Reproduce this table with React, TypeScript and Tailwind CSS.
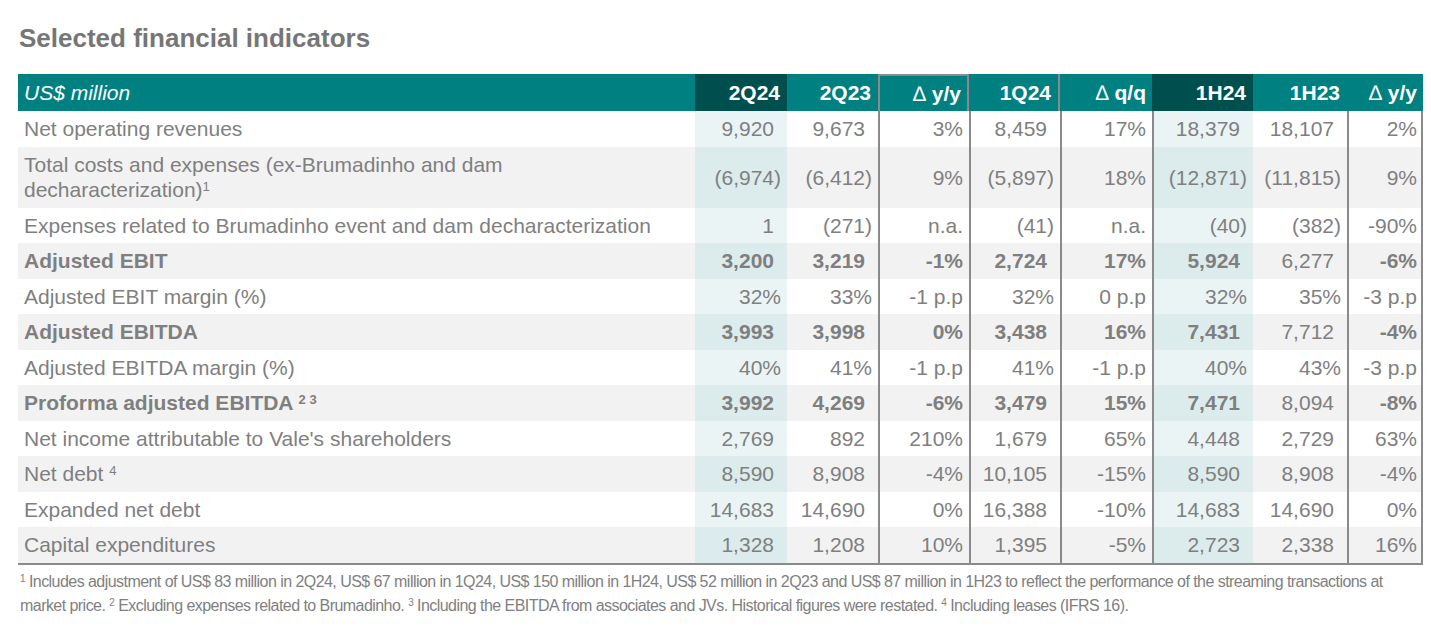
import React from "react";

type Row = {
  label: React.ReactNode;
  values: string[];
  bold?: boolean;
  tall?: boolean;
};

const rows: Row[] = [
  { label: "Net operating revenues", values: ["9,920", "9,673", "3%", "8,459", "17%", "18,379", "18,107", "2%"] },
  {
    label: (
      <>
        Total costs and expenses (ex-Brumadinho and dam
        <br />
        decharacterization)<sup className="text-[13px]">1</sup>
      </>
    ),
    values: ["(6,974)", "(6,412)", "9%", "(5,897)", "18%", "(12,871)", "(11,815)", "9%"],
    tall: true,
  },
  {
    label: "Expenses related to Brumadinho event and dam decharacterization",
    values: ["1", "(271)", "n.a.", "(41)", "n.a.", "(40)", "(382)", "-90%"],
  },
  { label: "Adjusted EBIT", values: ["3,200", "3,219", "-1%", "2,724", "17%", "5,924", "6,277", "-6%"], bold: true },
  { label: "Adjusted EBIT margin (%)", values: ["32%", "33%", "-1 p.p", "32%", "0 p.p", "32%", "35%", "-3 p.p"] },
  { label: "Adjusted EBITDA", values: ["3,993", "3,998", "0%", "3,438", "16%", "7,431", "7,712", "-4%"], bold: true },
  { label: "Adjusted EBITDA margin (%)", values: ["40%", "41%", "-1 p.p", "41%", "-1 p.p", "40%", "43%", "-3 p.p"] },
  {
    label: (
      <>
        Proforma adjusted EBITDA <sup className="text-[13px]">2 3</sup>
      </>
    ),
    values: ["3,992", "4,269", "-6%", "3,479", "15%", "7,471", "8,094", "-8%"],
    bold: true,
  },
  { label: "Net income attributable to Vale's shareholders", values: ["2,769", "892", "210%", "1,679", "65%", "4,448", "2,729", "63%"] },
  {
    label: (
      <>
        Net debt <sup className="text-[13px]">4</sup>
      </>
    ),
    values: ["8,590", "8,908", "-4%", "10,105", "-15%", "8,590", "8,908", "-4%"],
  },
  { label: "Expanded net debt", values: ["14,683", "14,690", "0%", "16,388", "-10%", "14,683", "14,690", "0%"] },
  { label: "Capital expenditures", values: ["1,328", "1,208", "10%", "1,395", "-5%", "2,723", "2,338", "16%"] },
];

const grid = "grid grid-cols-[677px_92px_91px_91px_91px_92px_101px_94px_76px]";

// body cell borders, per value column
const cellBorders = [
  "",
  "",
  "border-l-2 border-[#8a8a8a]",
  "border-l-2 border-[#8a8a8a]",
  "border-l-2 border-[#8a8a8a]",
  "border-l-2 border-[#8a8a8a]",
  "",
  "border-l-2 border-[#8a8a8a]",
];

function Value({ v }: { v: string }) {
  // plain numbers leave room for a closing paren, like an accounting format
  const plain = /^[\d,]+$/.test(v);
  return (
    <>
      {v}
      {plain && <span className="invisible">)</span>}
    </>
  );
}

export default function App() {
  return (
    <div className="w-[1431px] h-[634px] bg-white font-['Liberation_Sans',Arial,sans-serif] text-[#7f7f7f]">
      <h1 className="pt-[23px] pl-[19px] text-[26px] leading-[30px] font-bold text-[#767676]">
        Selected financial indicators
      </h1>

      <div className="mt-[21px] ml-[18px] w-[1405px]">
        {/* header */}
        <div className={`${grid} h-[37px] bg-[#008080] text-white text-[21px]`}>
          <div className="flex items-center pl-[6px] italic">US$ million</div>
          <div className="flex items-center justify-end pr-[7px] bg-[#004f4f] font-bold">2Q24</div>
          <div className="flex items-center justify-end pr-[7px] font-bold">2Q23</div>
          <div className="flex items-center justify-end pr-[6px] font-bold border-l-2 border-r-2 border-t-2 border-[#8a8a8a]">
            <span className="font-normal mr-[6px]">∆</span>y/y
          </div>
          <div className="flex items-center justify-end pr-[7px] font-bold border-r-2 border-[#8a8a8a]">1Q24</div>
          <div className="flex items-center justify-end pr-[6px] font-bold">
            <span className="font-normal mr-[6px]">∆</span>q/q
          </div>
          <div className="flex items-center justify-end pr-[7px] bg-[#004f4f] font-bold">1H24</div>
          <div className="flex items-center justify-end pr-[7px] font-bold">1H23</div>
          <div className="flex items-center justify-end pr-[6px] font-bold">
            <span className="font-normal mr-[6px]">∆</span>y/y
          </div>
        </div>

        {/* body */}
        <div className="border-b-2 border-[#8a8a8a] border-r-2 w-[1405px]">
          {rows.map((row, i) => {
            const shaded = i % 2 === 1;
            const tint = shaded ? "bg-[#dcecec]" : "bg-[#eaf4f4]";
            return (
              <div
                key={i}
                className={`${grid} ${row.tall ? "h-[61px] leading-[25px]" : "h-[35.5px]"} ${
                  shaded ? "bg-[#f2f2f2]" : "bg-white"
                } text-[21px]`}
              >
                <div className={`flex items-center pl-[6px] ${row.bold ? "font-bold" : ""}`}>
                  <div>{row.label}</div>
                </div>
                {row.values.map((v, j) => (
                  <div
                    key={j}
                    className={`flex items-center justify-end pr-[6px] whitespace-nowrap ${cellBorders[j]} ${
                      j === 0 || j === 5 ? tint : ""
                    } ${row.bold && j !== 6 ? "font-bold" : ""}`}
                  >
                    <Value v={v} />
                  </div>
                ))}
              </div>
            );
          })}
        </div>
      </div>

      <p className="mt-[5px] pl-[20px] text-[16px] leading-[24px] tracking-[-0.55px] whitespace-nowrap text-[#7f7f7f]">
        <sup className="text-[10px]">1</sup> Includes adjustment of US$ 83 million in 2Q24, US$ 67 million in 1Q24, US$
        150 million in 1H24, US$ 52 million in 2Q23 and US$ 87 million in 1H23 to reflect the performance of the
        streaming transactions at
        <br />
        market price. <sup className="text-[10px]">2</sup> Excluding expenses related to Brumadinho.{" "}
        <sup className="text-[10px]">3</sup> Including the EBITDA from associates and JVs. Historical figures were
        restated. <sup className="text-[10px]">4</sup> Including leases (IFRS 16).
      </p>
    </div>
  );
}
